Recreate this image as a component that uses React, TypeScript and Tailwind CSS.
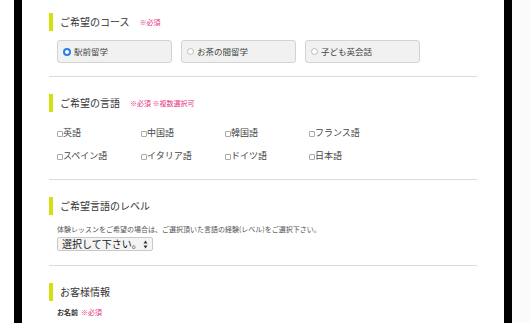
const jp = { fontFamily: '"Noto Sans CJK JP", "Noto Sans", sans-serif' };

function Heading({ title, note }: { title: string; note?: string }) {
  return (
    <div className="flex h-[18px] items-center border-l-[4px] border-[#d4e10c] pl-[7px]">
      <span className="text-[10px] leading-none text-[#333]">{title}</span>
      {note && <span className="ml-[10px] text-[7px] leading-none text-[#e5307f]">{note}</span>}
    </div>
  );
}

function RadioBox({ label, checked }: { label: string; checked?: boolean }) {
  return (
    <div className="flex h-[23px] w-[115px] items-center gap-[3px] rounded-[3px] border border-[#d3d3d3] bg-[#f1f1f1] pl-[5px]">
      {checked ? (
        <span className="h-[8px] w-[8px] rounded-full border-[2.5px] border-[#2b7de9] bg-white" />
      ) : (
        <span className="h-[7px] w-[7px] rounded-full border border-[#bbb] bg-white" />
      )}
      <span className="text-[8.5px] leading-none text-[#444]">{label}</span>
    </div>
  );
}

function Check({ label }: { label: string }) {
  return (
    <div className="flex h-[16px] items-center">
      <span className="mt-[3px] h-[6px] w-[6px] rounded-[1px] border border-[#aaa] bg-white" />
      <span className="text-[9px] leading-none text-[#444]">{label}</span>
    </div>
  );
}

export default function App() {
  const langs = ["英語", "中国語", "韓国語", "フランス語", "スペイン語", "イタリア語", "ドイツ語", "日本語"];
  return (
    <div className="flex h-[323px] w-[530px] overflow-hidden bg-white" style={jp}>
      <div className="w-[14px] shrink-0 bg-white" />
      <div className="w-[8px] shrink-0 bg-black" />
      <div className="flex-1 px-[27px]">
        <section className="border-b border-[#dcdcdc] pb-[13px] pt-[13px]">
          <Heading title="ご希望のコース" note="※必須" />
          <div className="mt-[9px] flex gap-[9px] pl-[8px]">
            <RadioBox label="駅前留学" checked />
            <RadioBox label="お茶の間留学" />
            <RadioBox label="子ども英会話" />
          </div>
        </section>
        <section className="border-b border-[#dcdcdc] pb-[16px] pt-[17px]">
          <Heading title="ご希望の言語" note="※必須 ※複数選択可" />
          <div className="mt-[12px] grid grid-cols-[84px_84px_84px_84px] gap-y-[7px] pl-[8px]">
            {langs.map((l) => (
              <Check key={l} label={l} />
            ))}
          </div>
        </section>
        <section className="border-b border-[#dcdcdc] pb-[14px] pt-[17px]">
          <Heading title="ご希望言語のレベル" />
          <p className="mt-[9px] pl-[8px] text-[7px] leading-[10px] text-[#555]">
            体験レッスンをご希望の場合は、ご選択頂いた言語の経験(レベル)をご選択下さい。
          </p>
          <div className="ml-[8px] mt-[3px] flex h-[14px] w-[96px] items-center justify-between rounded-[2px] border border-[#c8c8c8] bg-[#f4f4f4] px-[4px]">
            <span className="text-[10px] leading-none text-[#222]">選択して下さい。</span>
            <svg width="5" height="9" viewBox="0 0 5 9">
              <path d="M0.5 3.5 L2.5 0.5 L4.5 3.5 Z M0.5 5.5 L2.5 8.5 L4.5 5.5 Z" fill="#333" />
            </svg>
          </div>
        </section>
        <section className="pt-[17px]">
          <Heading title="お客様情報" />
          <div className="mt-[8px] flex items-center gap-[3px] pl-[8px] text-[7px] leading-none">
            <span className="font-bold text-[#333]">お名前</span>
            <span className="text-[#e5307f]">※必須</span>
          </div>
        </section>
      </div>
      <div className="w-[8px] shrink-0 bg-black" />
      <div className="w-[18px] shrink-0 bg-[#fbfbfb]" />
    </div>
  );
}
